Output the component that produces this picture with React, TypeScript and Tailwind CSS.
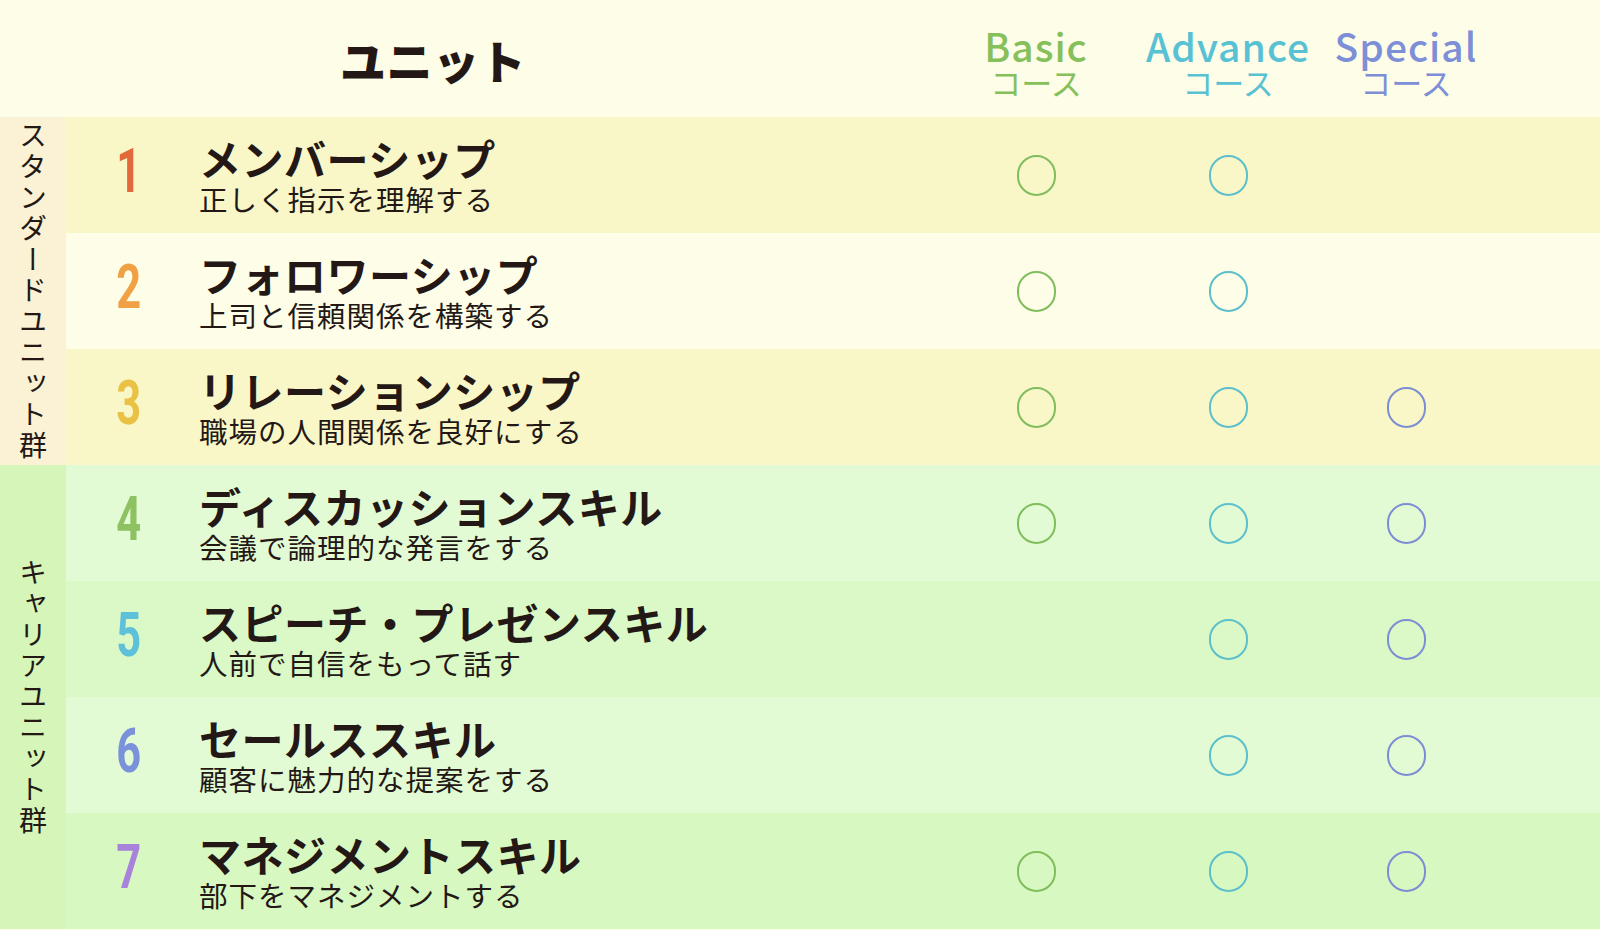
import React from "react";

type Unit = {
  no: number;
  color: string;
  title: string;
  sub: string;
  basic: boolean;
  advance: boolean;
  special: boolean;
  bg: string;
};

const units: Unit[] = [
  { no: 1, color: "text-[#e3683a]", title: "メンバーシップ", sub: "正しく指示を理解する", basic: true, advance: true, special: false, bg: "bg-[#f9f6c8]" },
  { no: 2, color: "text-[#f0a143]", title: "フォロワーシップ", sub: "上司と信頼関係を構築する", basic: true, advance: true, special: false, bg: "bg-[#fdfde8]" },
  { no: 3, color: "text-[#e9c245]", title: "リレーションシップ", sub: "職場の人間関係を良好にする", basic: true, advance: true, special: true, bg: "bg-[#f9f6c8]" },
  { no: 4, color: "text-[#8ec162]", title: "ディスカッションスキル", sub: "会議で論理的な発言をする", basic: true, advance: true, special: true, bg: "bg-[#e3fbd4]" },
  { no: 5, color: "text-[#5ec1d9]", title: "スピーチ・プレゼンスキル", sub: "人前で自信をもって話す", basic: false, advance: true, special: true, bg: "bg-[#daf9c6]" },
  { no: 6, color: "text-[#7a92d9]", title: "セールススキル", sub: "顧客に魅力的な提案をする", basic: false, advance: true, special: true, bg: "bg-[#e3fbd4]" },
  { no: 7, color: "text-[#a982dc]", title: "マネジメントスキル", sub: "部下をマネジメントする", basic: true, advance: true, special: true, bg: "bg-[#d8f8c2]" },
];

const font = "font-['Noto_Sans_CJK_JP','Noto_Sans',sans-serif]";

const Mark = ({ on, color }: { on: boolean; color: string }) => (
  <div className="flex items-center justify-center">
    {on && <div className={`w-[39px] h-[41px] rounded-full border-[2.5px] ${color}`} />}
  </div>
);

const Row = ({ u }: { u: Unit }) => (
  <div className={`flex h-[116px] ${u.bg}`}>
    <div className="w-[126px] flex items-center justify-center">
      <span className={`inline-block font-['Roboto',sans-serif] font-bold text-[62px] leading-none scale-x-[0.7] -mt-2 ${u.color}`}>
        {u.no}
      </span>
    </div>
    <div className="w-[748px] flex flex-col justify-center pl-[7px] text-[#231815]">
      <div className="text-[42px] font-bold leading-[46px] tracking-[0.5px]">{u.title}</div>
      <div className="text-[28.5px] leading-[33px] tracking-[1px] mt-[1px]">{u.sub}</div>
    </div>
    <div className="w-[192px] grid">
      <Mark on={u.basic} color="border-[#80bd5c]" />
    </div>
    <div className="w-[192px] grid">
      <Mark on={u.advance} color="border-[#5dbfca]" />
    </div>
    <div className="w-[164px] grid">
      <Mark on={u.special} color="border-[#7c8ed3]" />
    </div>
  </div>
);

const Group = ({ label, bg, rows }: { label: string; bg: string; rows: Unit[] }) => (
  <div className="flex">
    <div className={`w-[66px] flex items-center justify-center ${bg}`}>
      <span className="[writing-mode:vertical-rl] text-[28px] leading-none tracking-[3px] text-[#231815]">
        {label}
      </span>
    </div>
    <div className="flex-1 flex flex-col">
      {rows.map((u) => (
        <Row key={u.no} u={u} />
      ))}
    </div>
  </div>
);

const CourseHead = ({ name, w, color }: { name: string; w: string; color: string }) => (
  <div className={`${w} flex flex-col items-center pt-[25px] ${color}`}>
    <span className="text-[39px] font-medium leading-[40px] tracking-[1px]">{name}</span>
    <span className="text-[31px] leading-[34px]">コース</span>
  </div>
);

export default function App() {
  return (
    <div className={`w-[1600px] h-[930px] overflow-hidden bg-[#fdfde8] ${font}`}>
      <div className="flex h-[117px]">
        <div className="w-[940px] flex items-center pl-[340px]">
          <span className="text-[46px] font-black text-[#231815] tracking-[0.5px] leading-none">ユニット</span>
        </div>
        <CourseHead name="Basic" w="w-[192px]" color="text-[#86c05a]" />
        <CourseHead name="Advance" w="w-[192px]" color="text-[#58c1d4]" />
        <CourseHead name="Special" w="w-[164px]" color="text-[#7d8fd6]" />
      </div>
      <Group label="スタンダードユニット群" bg="bg-[#fbf1d4]" rows={units.slice(0, 3)} />
      <Group label="キャリアユニット群" bg="bg-[#d5f6b8]" rows={units.slice(3)} />
    </div>
  );
}
